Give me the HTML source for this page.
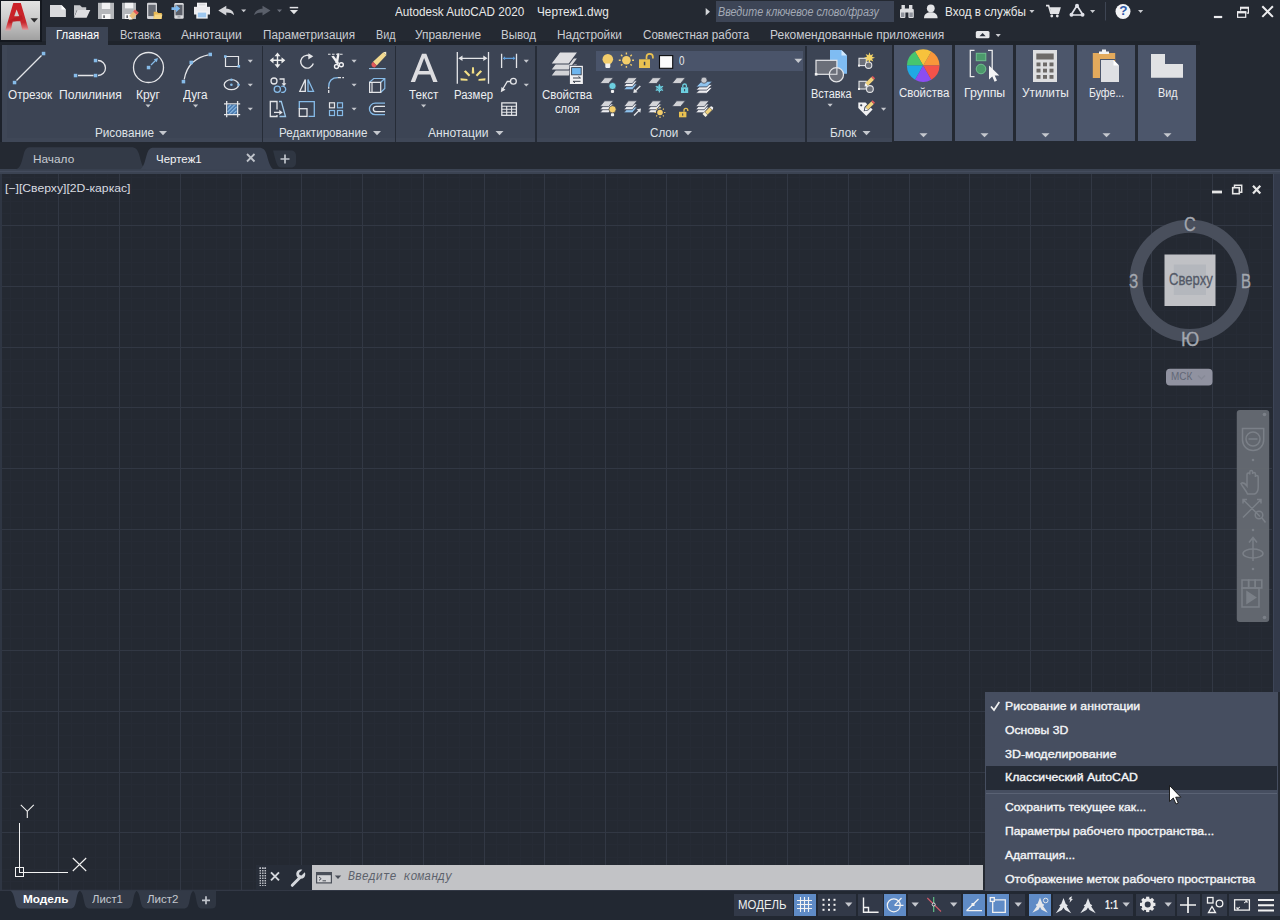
<!DOCTYPE html>
<html><head><meta charset="utf-8"><title>AutoCAD</title><style>
html,body{margin:0;padding:0;}
body{width:1280px;height:920px;overflow:hidden;position:relative;background:#242932;font-family:"Liberation Sans",sans-serif;}
.a{position:absolute;}
.t{position:absolute;white-space:pre;line-height:1;transform-origin:0 50%;font-family:"Liberation Sans",sans-serif;}
svg{position:absolute;left:0;top:0;overflow:visible;}

</style></head>
<body>
<!-- ===== ribbon backgrounds ===== -->
<div class="a" style="left:0;top:41px;width:1199.500px;height:4px;background:#1f242c;"></div>
<div class="a" style="left:46px;top:27px;width:62px;height:20px;background:#3c4454;"></div>
<div class="a" style="left:2px;top:45px;width:890px;height:97px;background:#3c4454;"></div>
<div class="a" style="left:0;top:45px;width:2px;height:97px;background:#1d222b;"></div>
<div class="a" style="left:2px;top:45px;width:5px;height:97px;background:#3f4757;"></div>
<div class="a" style="left:2px;top:138px;width:890px;height:4px;background:#3f4757;"></div>
<!-- panel separators -->
<div class="a" style="left:261.5px;top:46px;width:1.5px;height:96px;background:#262c37;"></div>
<div class="a" style="left:394.7px;top:46px;width:1.5px;height:96px;background:#262c37;"></div>
<div class="a" style="left:535px;top:46px;width:1.5px;height:96px;background:#262c37;"></div>
<div class="a" style="left:805.2px;top:46px;width:1.5px;height:96px;background:#262c37;"></div>
<!-- collapsed panels -->
<div class="a" style="left:894px;top:45px;width:58px;height:96px;background:#4c566b;"></div>
<div class="a" style="left:955px;top:45px;width:58px;height:96px;background:#4c566b;"></div>
<div class="a" style="left:1016px;top:45px;width:58px;height:96px;background:#4c566b;"></div>
<div class="a" style="left:1077px;top:45px;width:58.300px;height:96px;background:#4c566b;"></div>
<div class="a" style="left:1138px;top:45px;width:58.300px;height:96px;background:#4c566b;"></div>
<!-- layer combo -->
<div class="a" style="left:596.3px;top:50.6px;width:207px;height:20.6px;background:#4a546a;"></div>
<!-- search box -->
<div class="a" style="left:715.7px;top:1px;width:178px;height:21px;background:#3d4556;"></div>
<!-- ===== file tab bar ===== -->
<div class="a" style="left:0;top:169px;width:1280px;height:5px;background:#3b4352;"></div>
<div class="a" style="left:0;top:170.5px;width:1280px;height:1.5px;background:#444c5d;"></div>
<!-- ===== drawing area ===== -->
<div class="a" id="dw" style="left:0;top:174px;width:1280px;height:716px;background:#242932;"></div>
<!-- status bar -->
<div class="a" style="left:0;top:890px;width:1280px;height:30px;background:#222832;"></div>

<svg width="1280" height="920" viewBox="0 0 1280 920" shape-rendering="crispEdges">
<path d="M10.5 174V890M22.5 174V890M34.5 174V890M46.5 174V890M71.5 174V890M83.5 174V890M95.5 174V890M107.5 174V890M131.5 174V890M144.5 174V890M156.5 174V890M168.5 174V890M192.5 174V890M204.5 174V890M216.5 174V890M229.5 174V890M253.5 174V890M265.5 174V890M277.5 174V890M289.5 174V890M314.5 174V890M326.5 174V890M338.5 174V890M350.5 174V890M374.5 174V890M386.5 174V890M399.5 174V890M411.5 174V890M435.5 174V890M447.5 174V890M459.5 174V890M471.5 174V890M496.5 174V890M508.5 174V890M520.5 174V890M532.5 174V890M556.5 174V890M569.5 174V890M581.5 174V890M593.5 174V890M617.5 174V890M629.5 174V890M641.5 174V890M654.5 174V890M678.5 174V890M690.5 174V890M702.5 174V890M714.5 174V890M739.5 174V890M751.5 174V890M763.5 174V890M775.5 174V890M799.5 174V890M811.5 174V890M824.5 174V890M836.5 174V890M860.5 174V890M872.5 174V890M884.5 174V890M896.5 174V890M921.5 174V890M933.5 174V890M945.5 174V890M957.5 174V890M981.5 174V890M994.5 174V890M1006.5 174V890M1018.5 174V890M1042.5 174V890M1054.5 174V890M1066.5 174V890M1079.5 174V890M1103.5 174V890M1115.5 174V890M1127.5 174V890M1139.5 174V890M1164.5 174V890M1176.5 174V890M1188.5 174V890M1200.5 174V890M1224.5 174V890M1236.5 174V890M1249.5 174V890M1261.5 174V890M0 177.5H1272M0 189.5H1272M0 201.5H1272M0 213.5H1272M0 237.5H1272M0 249.5H1272M0 262.5H1272M0 274.5H1272M0 298.5H1272M0 310.5H1272M0 322.5H1272M0 334.5H1272M0 359.5H1272M0 371.5H1272M0 383.5H1272M0 395.5H1272M0 419.5H1272M0 432.5H1272M0 444.5H1272M0 456.5H1272M0 480.5H1272M0 492.5H1272M0 504.5H1272M0 517.5H1272M0 541.5H1272M0 553.5H1272M0 565.5H1272M0 577.5H1272M0 602.5H1272M0 614.5H1272M0 626.5H1272M0 638.5H1272M0 662.5H1272M0 674.5H1272M0 687.5H1272M0 699.5H1272M0 723.5H1272M0 735.5H1272M0 747.5H1272M0 759.5H1272M0 784.5H1272M0 796.5H1272M0 808.5H1272M0 820.5H1272M0 844.5H1272M0 857.5H1272M0 869.5H1272M0 881.5H1272" stroke="#262b35" stroke-width="1" fill="none" shape-rendering="auto"/>
<path d="M58.5 174V890M119.5 174V890M180.5 174V890M241.5 174V890M301.5 174V890M362.5 174V890M423.5 174V890M484.5 174V890M544.5 174V890M605.5 174V890M666.5 174V890M726.5 174V890M787.5 174V890M848.5 174V890M909.5 174V890M969.5 174V890M1030.5 174V890M1091.5 174V890M1151.5 174V890M1212.5 174V890M0 225.5H1272M0 286.5H1272M0 347.5H1272M0 407.5H1272M0 468.5H1272M0 529.5H1272M0 589.5H1272M0 650.5H1272M0 711.5H1272M0 772.5H1272M0 832.5H1272" stroke="#323844" stroke-width="1" fill="none" shape-rendering="auto"/>
</svg>
<!-- file tabs + layout tabs -->
<svg width="1280" height="920" viewBox="0 0 1280 920">
<!-- Начало tab -->
<path d="M16 169.2 C21 168 22 160 24 153 C25.5 148.5 27 147.3 31 147.3 H131 C136 147.3 137.5 150 139 154 C141 161 142 168 146 169.2 Z" fill="#333a47"/>
<!-- Чертеж1 active tab -->
<path d="M139.5 169.5 C144 168 145 160 147 154 C148.5 149.5 150 147.8 154 147.8 H259 C263.5 147.8 265 150 266.5 154 C268.5 161 270 168 274 169.5 Z" fill="#3c4454"/>
<!-- plus tab -->
<path d="M273 150.5 H291 C294 150.5 296 152.5 296 155.5 V162.5 C296 165.5 294 167.5 291 167.5 H281 C277 167.5 276 162 273 150.5 Z" fill="#2f3642"/>
<path d="M285 154.5V163.5M280.5 159H289.5" stroke="#c0c4cb" stroke-width="1.700" fill="none"/>
<!-- close x -->
<path d="M247 154L254.5 161.5M254.5 154L247 161.5" stroke="#bfc3ca" stroke-width="1.800" fill="none"/>
<!-- layout tabs -->
<path d="M0 890.3H1280" stroke="#373d4a" stroke-width="1"/>
<path d="M10 890.5 H80 C77.5 892 77 896 76 901 C75 906 74 908.5 70 908.5 H21 C17 908.5 16 906 15 901 C14 896 13 892 10 890.5 Z" fill="#3c4454"/>
<path d="M79.5 890.8 H137 C134.5 892 134 896 133 901 C132 906 131 908.5 127 908.5 H90 C86 908.5 85 906 84 901 C83 896 82.5 892 79.5 890.8 Z" fill="#333a47"/>
<path d="M136 890.8 H193.5 C191 892 190.500 896 189.5 901 C188.5 906 187.5 908.5 183.5 908.5 H146.5 C142.5 908.5 141.5 906 140.5 901 C139.500 896 139 892 136 890.8 Z" fill="#333a47"/>
<path d="M192.500 890.8 H216 V904 C216 907 214.500 908.5 211.5 908.5 H202 C198.500 908.5 197.500 906 196.5 901 C195.500 896 195.500 892 192.500 890.8 Z" fill="#2f3642"/>
<path d="M206 896.3V904.3M202 900.3H210" stroke="#c0c4cb" stroke-width="1.700" fill="none"/>
</svg>

<!-- viewcube + navbar + ucs + vp controls + right strip -->
<div class="a" style="left:1272.500px;top:174px;width:7.500px;height:716px;background:#333a4a;"></div><div class="a" style="left:1272.500px;top:174px;width:1px;height:716px;background:#3d4557;"></div>
<div class="a" style="left:0;top:174px;width:1.500px;height:716px;background:#2f3643;"></div>
<svg width="1280" height="920" viewBox="0 0 1280 920">
<!-- compass ring -->
<ellipse cx="1189.700" cy="280.900" rx="53.600" ry="54.600" fill="none" stroke="#494f5c" stroke-width="13"/>
<!-- cube face -->
<rect x="1164.500" y="254.500" width="51" height="51.5" fill="#c0c1c5"/>
<rect x="1173.800" y="264.500" width="32.200" height="30.500" fill="#b4b7bd"/>
<!-- MCK box -->
<rect x="1166" y="368.700" width="46.500" height="16.800" rx="4" fill="#9092a0"/>
<path d="M1198 375.500l3.500 3.500 3.500-3.500" fill="none" stroke="#868996" stroke-width="1.500"/>
<!-- viewport controls -->
<path d="M1212 192H1222" stroke="#e6e6e6" stroke-width="2.800"/>
<path d="M1234.500 187.200V185.300H1241.700V192.300H1239.800" fill="none" stroke="#e6e6e6" stroke-width="1.500"/>
<rect x="1232.700" y="187.700" width="6.600" height="6" fill="none" stroke="#e6e6e6" stroke-width="1.600"/>
<path d="M1253 185.700L1260.300 193.500M1260.300 185.700L1253 193.500" stroke="#e6e6e6" stroke-width="2.200"/>
<!-- nav bar -->
<rect x="1236.800" y="410" width="32.400" height="212" rx="3" fill="#656a71" opacity="0.960"/>
<g fill="none" stroke="#7b8088" stroke-width="1.500">
 <!-- wheel -->
 <path d="M1242.500 428.500H1263.700V440a10.600 10.600 0 0 1-21.200 0Z" />
 <circle cx="1253" cy="439" r="7"/>
 <path d="M1248.500 439h9"/>
 <!-- hand -->
 <path d="M1247.500 494c-1.500-4-5-7-6.500-10.500 2-1.500 4.500.500 6 2.500v-11.500c0-2 2.800-2 2.800 0v-2.500c0-2 2.800-2 2.800 0v2c0-2 2.800-2 2.800 0v3c0-2 2.800-2 2.800 0v10.500c0 3-1.500 5.500-3.500 6.500z"/>
 <!-- zoom extents -->
 <path d="M1243 499.500l17 17M1261 499.500l-18 18M1243 503.500v-4h4M1257 499.500h4v4"/>
 <circle cx="1259" cy="515" r="3.800"/>
 <path d="M1262 518l3.500 4.500"/>
 <!-- orbit -->
 <path d="M1253 561v-22M1249 542.500l4-5 4 5"/>
 <ellipse cx="1253" cy="553.500" rx="10" ry="4.500"/>
 <!-- showmotion -->
 <rect x="1242" y="580" width="6.600" height="8"/><rect x="1248.600" y="580" width="6.600" height="8"/><rect x="1255.200" y="580" width="6.600" height="8"/>
 <rect x="1242" y="588" width="17" height="19"/>
 <path d="M1247 592v11l8.500-5.500z" fill="#7b8088"/>
</g>
<g fill="#7b8088"><circle cx="1253" cy="460" r="1.300"/><circle cx="1253" cy="530" r="1.300"/><circle cx="1253" cy="569" r="1.300"/>
<circle cx="1264.500" cy="414.500" r="1.800"/><circle cx="1264.500" cy="617.500" r="1.800"/></g>
<!-- UCS icon -->
<g fill="none" stroke="#f2f2f2" stroke-width="1.100" shape-rendering="crispEdges">
 <path d="M19.500 823V872.500H67.500"/>
 <rect x="15.500" y="867.500" width="8" height="9"/>
</g>
<g fill="none" stroke="#f2f2f2" stroke-width="1.100">
 <path d="M20.800 804.800L27.300 811.300L33.800 804.800M27.300 811.300V818"/>
 <path d="M72.800 858L86.200 871M86.200 858L72.800 871"/>
</g>
</svg>

<!-- command line -->
<div class="a" style="left:256px;top:865px;width:56px;height:24.600px;background:#272d38;"></div>
<div class="a" style="left:312px;top:865px;width:671px;height:24.600px;background:#c2c3c6;"></div>
<svg width="1280" height="920" viewBox="0 0 1280 920">
<!-- grip -->
<g fill="#b9bcc3">
<rect x="259.500" y="867.500" width="1.500" height="1.500"/><rect x="262" y="867.500" width="1.500" height="1.500"/><rect x="264.500" y="867.500" width="1.500" height="1.500"/>
</g>
<path d="M260.300 867.500V886M262.800 867.500V886M265.300 867.500V886" stroke="#b9bcc3" stroke-width="1.500" stroke-dasharray="1.500 1" fill="none"/>
<path d="M271 872.300L279 880.300M279 872.300L271 880.300" stroke="#d5d8dd" stroke-width="1.900" fill="none"/>
<!-- wrench -->
<path d="M292.300 885.300L299.500 878" stroke="#d5d8dd" stroke-width="3" stroke-linecap="round" fill="none"/>
<path d="M304.800 872.300l-3.300 3.300-2-.5-.5-2 3.300-3.300c-2.200-.8-4.600.200-5.600 2.300-1 2.100-.3 4.500 1.500 5.800 1.800 1.300 4.300 1.100 5.900-.400 1.200-1.400 1.500-3.500.700-5.200z" fill="#d5d8dd"/>
<!-- cmd icon -->
<rect x="316.600" y="872.600" width="14.800" height="10.300" fill="#d4d5d8" stroke="#4a4f59" stroke-width="1.200"/>
<path d="M316 874h16" stroke="#4a4f59" stroke-width="2.400"/>
<path d="M319 877l2.200 1.700-2.200 1.700M322.500 880.800h3.500" stroke="#4a4f59" stroke-width="1" fill="none"/>
<path d="M334.800 875.500h6.400l-3.200 3.600z" fill="#4a4f59"/>
</svg>

<!-- workspace menu -->
<div class="a" style="left:984.500px;top:692px;width:293.500px;height:198.500px;background:#464e60;"></div>
<div class="a" style="left:985.500px;top:766px;width:291.500px;height:23.600px;background:#252b36;"></div>
<div class="a" style="left:985.500px;top:792.600px;width:291.500px;height:1px;background:#5a6274;"></div>
<div class="a" style="left:1278px;top:692px;width:2px;height:198.500px;background:#242932;"></div>
<svg width="1280" height="920" viewBox="0 0 1280 920">
<path d="M991 706.500L994 710L999.300 702" fill="none" stroke="#f0f0f0" stroke-width="1.700"/>
<!-- mouse cursor -->
<path d="M1169.500 785.500V801.500L1173.300 798L1176 804L1178.300 803L1175.700 797.200H1180.800Z" fill="#ffffff" stroke="#111" stroke-width="0.900" stroke-linejoin="round"/>
</svg>

<!-- status bar -->
<div class="a" style="left:734px;top:893.500px;width:58.500px;height:22.500px;background:#323948;"></div>
<div class="a" style="left:794px;top:893.500px;width:21.800px;height:22.500px;background:#5f8bc6;"></div>
<div class="a" style="left:817.500px;top:893.500px;width:38.500px;height:22.500px;background:#323948;"></div>
<div class="a" style="left:858px;top:893.500px;width:24.500px;height:22.500px;background:#323948;"></div>
<div class="a" style="left:884px;top:893.500px;width:22px;height:22.500px;background:#5f8bc6;"></div>
<div class="a" style="left:907.500px;top:893.500px;width:53.500px;height:22.500px;background:#323948;"></div>
<div class="a" style="left:962.800px;top:893.500px;width:22px;height:22.500px;background:#5f8bc6;"></div>
<div class="a" style="left:987.300px;top:893.500px;width:21.500px;height:22.500px;background:#5f8bc6;"></div>
<div class="a" style="left:1010.300px;top:893.500px;width:15px;height:22.500px;background:#323948;"></div>
<div class="a" style="left:1029px;top:893.500px;width:22.400px;height:22.500px;background:#5f8bc6;"></div>
<div class="a" style="left:1053px;top:893.500px;width:80px;height:22.500px;background:#323948;"></div>
<div class="a" style="left:1135.500px;top:893.500px;width:39px;height:22.500px;background:#323948;"></div>
<div class="a" style="left:1176.500px;top:893.500px;width:23px;height:22.500px;background:#323948;"></div>
<div class="a" style="left:1201.500px;top:893.500px;width:25.500px;height:22.500px;background:#323948;"></div>
<div class="a" style="left:1229px;top:893.500px;width:51px;height:22.500px;background:#323948;"></div>
<svg width="1280" height="920" viewBox="0 0 1280 920">
<g fill="none" stroke="#f2f2f2" stroke-width="1.300">
<!-- grid icon -->
<path d="M800.500 897V912M804.500 897V912M808.500 897V912M797 900.500H812M797 904.500H812M797 908.500H812" stroke-width="1.100"/>
<!-- ortho -->
<path d="M863.500 897.500V912.300H878.600M863.500 907.500H868.500V912.300" stroke-width="1.400"/>
<!-- polar -->
<circle cx="893.800" cy="905.300" r="6.500" stroke-width="1.200"/><path d="M894.500 905.300H903.500M894.500 905.300L901.500 898" stroke-width="1.200"/>
<!-- otrack -->
<path d="M966.500 910.700H982M966.500 910.700L978.500 899" stroke-width="1.300"/>
<!-- osnap -->
<path d="M994.500 899.800H1005.300V912.300H992.700V902"/>
<rect x="990.300" y="897.600" width="4" height="3.800" fill="#5f8bc6"/>
<!-- plus -->
<path d="M1188 897V913M1180 905H1196" stroke-width="1.700"/>
<!-- shapes -->
<rect x="1207.500" y="897.500" width="5.500" height="5.500"/><circle cx="1219.500" cy="903.500" r="3.300"/><path d="M1212 906.500L1215.500 912.500H1208.500Z"/>
<!-- fullscreen -->
<rect x="1234.600" y="899.800" width="14.800" height="10.300"/>
<path d="M1240 907l-3 2M1237 907v2h2M1244 903l3-2M1247 903v-2h-2" stroke-width="1"/>
<!-- hamburger -->
<path d="M1258 900H1274M1258 905.200H1274M1258 910.500H1274" stroke-width="2"/>
</g>
<!-- snap dots -->
<g fill="#f2f2f2">
<rect x="822.500" y="898.800" width="2" height="2"/><rect x="828" y="898.800" width="2" height="2"/><rect x="833.500" y="898.800" width="2" height="2"/>
<rect x="822.500" y="903.800" width="2" height="2"/><rect x="828" y="903.800" width="2" height="2"/><rect x="833.500" y="903.800" width="2" height="2"/>
<rect x="822.500" y="908.800" width="2" height="2"/><rect x="828" y="908.800" width="2" height="2"/><rect x="833.500" y="908.800" width="2" height="2"/>
<rect x="971.500" y="903" width="3" height="3"/>
</g>
<!-- dropdown arrows -->
<g fill="#c5c8ce">
<path d="M845 902.500h7.400l-3.700 4.200z"/><path d="M911.500 902.500h7.400l-3.700 4.200z"/><path d="M950 902.500h7.400l-3.700 4.200z"/><path d="M1014.500 902.500h7.400l-3.700 4.200z"/><path d="M1122.500 902.500h7.400l-3.700 4.200z"/><path d="M1164.500 902.500h7.400l-3.700 4.200z"/>
</g>
<!-- isodraft -->
<path d="M933.700 897V912" stroke="#63c98a" stroke-width="1.100"/><path d="M927.300 898L941 911.500" stroke="#cf5c6b" stroke-width="1.100"/><circle cx="933.700" cy="904.500" r="1.500" fill="#323948" stroke="#f2f2f2" stroke-width="0.900"/>
<!-- annotation icons -->
<g fill="#e4e6ea">
<path d="M1040.0 897.5L1042.3 903.5L1044.3 904.8L1043.2 906.2L1047.7 912.8L1041.6 909.7L1040.0 907.1L1038.4 909.7L1032.3 912.8L1036.8 906.2L1035.7 904.8L1037.7 903.5Z"/>
<path d="M1063.5 897.9L1065.8 903.9L1067.8 905.2L1066.7 906.6L1071.2 913.2L1065.1 910.1L1063.5 907.5L1061.9 910.1L1055.8 913.2L1060.3 906.6L1059.2 905.2L1061.2 903.9Z"/>
<path d="M1088.0 897.9L1090.3 903.9L1092.3 905.2L1091.2 906.6L1095.7 913.2L1089.6 910.1L1088.0 907.5L1086.4 910.1L1080.3 913.2L1084.8 906.6L1083.7 905.2L1085.7 903.9Z"/>
<path d="M1069.800 897.200l2.400-1-1 2.600 1.700.2-3.400 3.700.8-3.100-1.800-.2z"/>
</g>
<circle cx="1045.700" cy="900.500" r="2.300" fill="none" stroke="#e4e6ea" stroke-width="1"/>
<!-- gear -->
<g transform="translate(1147.700 904.400)">
<circle r="4.600" fill="none" stroke="#e9e9ea" stroke-width="3.200"/>
<g fill="#e9e9ea">
<rect x="-1.600" y="-7.700" width="3.200" height="3.400"/><rect x="-1.600" y="4.300" width="3.200" height="3.400"/>
<rect x="-7.700" y="-1.600" width="3.400" height="3.200"/><rect x="4.300" y="-1.600" width="3.400" height="3.200"/>
<g transform="rotate(45)"><rect x="-1.600" y="-7.700" width="3.200" height="3.400"/><rect x="-1.600" y="4.300" width="3.200" height="3.400"/>
<rect x="-7.700" y="-1.600" width="3.400" height="3.200"/><rect x="4.300" y="-1.600" width="3.400" height="3.200"/></g>
</g></g>
</svg>

<!-- title bar: app button + QAT + right icons -->
<div class="a" style="left:0;top:0;width:41.500px;height:41.500px;background:#14181f;"></div>
<div class="a" style="left:1px;top:1px;width:39px;height:39px;background:linear-gradient(#e2e2e2,#cfcfcf 40%,#a0a0a0);"></div>
<svg width="1280" height="920" viewBox="0 0 1280 920">
<defs>
<linearGradient id="ag" x1="0" y1="0" x2="0" y2="1"><stop offset="0" stop-color="#cc1f26"/><stop offset="0.700" stop-color="#c7262c"/><stop offset="0.880" stop-color="#db6266"/><stop offset="1" stop-color="#e6a3a6" stop-opacity="0.750"/></linearGradient>
</defs>
<!-- big A -->
<path d="M13.300 3H20.800L28.700 30H22.300L20.300 21.300H12.700L10.800 30.500H5.200Z M14.200 16.300H19.300L16.600 9.500Z" fill="url(#ag)" fill-rule="evenodd"/>
<path d="M9 20.500l12.500-5.500 1.300 4.300-13.300 4z" fill="#ad181e" opacity="0.500"/>
<path d="M30.500 18.200H38L34.250 22.600Z" fill="#2b2b2d"/>
<!-- new -->
<path d="M50 5.100H61.500L65.900 9.500V17H50Z" fill="#d9d9dc"/><path d="M61.500 5.100V9.500H65.900Z" fill="#ffffff"/>
<!-- open -->
<path d="M74 17.500V5.200H80L82 7.200H86.200V10H77Z" fill="#c6c7cb"/>
<path d="M77.300 10H90.300L86.600 17.800H74Z" fill="#dedee1"/>
<!-- save -->
<path d="M98 2.800H114V19H98Z" fill="#b5b7bb"/>
<rect x="101.800" y="2.800" width="8.400" height="6.200" fill="#f1f1f3"/>
<rect x="101.800" y="14" width="8.700" height="5" fill="#f6f6f7"/><rect x="103.400" y="15.300" width="1.300" height="2.700" fill="#3b3f48"/>
<!-- save as -->
<path d="M122 2.800H136V19H122Z" fill="#b5b7bb"/>
<rect x="125" y="2.800" width="8.300" height="5.600" fill="#f1f1f3"/>
<rect x="124.800" y="14" width="6" height="5" fill="#f6f6f7"/><rect x="126.500" y="15.300" width="1.300" height="2.700" fill="#3b3f48"/>
<path d="M135 9.500L138.600 12.800L132.500 19.200L128.800 19.600L129.300 15.800Z" fill="#e8bd7c"/>
<path d="M135 9.500L138.600 12.800L136.800 14.700L133.200 11.400Z" fill="#e2595b"/>
<path d="M129.300 15.800L132.500 19.200L128.800 19.600Z" fill="#f4f4f4"/>
<!-- mobile open -->
<rect x="147" y="2.800" width="10" height="16.200" rx="1.200" fill="#d2d3d7"/><rect x="148.300" y="4.800" width="7.400" height="11.300" fill="#676b74"/>
<path d="M153.700 19V11.700H157L158.200 13H161.800V19Z" fill="#e9b955"/><path d="M155 14.500H162.500L161 19H153.700Z" fill="#f6d685"/>
<!-- mobile save -->
<rect x="174.300" y="3" width="9.400" height="15.800" rx="1.200" fill="#dadbde"/><rect x="175.500" y="4.800" width="7" height="10.500" fill="#5b5f69"/>
<rect x="177.500" y="16.400" width="3" height="1" fill="#8a8d95"/>
<path d="M171.500 7.300H176V5L180.200 8.600L176 12.200V9.900H171.500Z" fill="#7fbaf0"/>
<!-- print -->
<rect x="197" y="2.700" width="10" height="5" fill="#f2f2f4"/>
<rect x="198.500" y="3.800" width="7" height="1.600" fill="#d9dadd"/>
<path d="M194 6.800H210V14.500H194Z" fill="#ececef"/>
<rect x="196.300" y="11.300" width="11.400" height="7.300" fill="#f4f4f6"/><rect x="197.800" y="12.600" width="8.400" height="4.800" fill="#9dc7ef"/>
<!-- undo -->
<path d="M218.300 10.600L226.300 5.800V8.800C230.500 8.800 233.800 11 234 15.200C232 13 229.800 12.400 226.300 12.400V15.400Z" fill="#d3d4d8"/>
<path d="M241.200 9.600H246.200L243.700 12.300Z" fill="#c9cbd0"/>
<!-- redo dim -->
<path d="M270.500 10.600L262.500 5.800V8.800C258.300 8.800 255 11 254 15.200C256.500 13 258.800 12.400 262.500 12.400V15.400Z" fill="#5a5f6a"/>
<path d="M277 9.600H282L279.500 12.300Z" fill="#6a6f7a"/>
<!-- customise -->
<path d="M289.700 7.600H298.200" stroke="#e2e3e6" stroke-width="1.500"/><path d="M289.900 10H298L293.950 14.200Z" fill="#e2e3e6"/>
<!-- search arrow -->
<path d="M705.700 8V15.600L710 11.800Z" fill="#d5d7db"/>
<!-- binoculars -->
<g fill="#dcdde0">
<rect x="900" y="9" width="5.400" height="9" rx="1"/><rect x="908.400" y="9" width="5.400" height="9" rx="1"/>
<rect x="901.500" y="5" width="3.400" height="5"/><rect x="909" y="5" width="3.400" height="5"/>
<rect x="905" y="8.500" width="4" height="4"/>
</g>
<rect x="901" y="12.500" width="3.400" height="4.500" fill="#8f939c"/><rect x="909.400" y="12.500" width="3.400" height="4.500" fill="#8f939c"/>
<!-- user -->
<circle cx="930.800" cy="8.300" r="3.900" fill="#e3e4e7"/>
<path d="M924 18.300C924 14 927 12.300 930.800 12.300C934.600 12.300 937.600 14 937.600 18.300Z" fill="#e3e4e7"/>
<path d="M1029.300 10H1034.500L1031.900 12.900Z" fill="#c9cbd0"/>
<!-- cart -->
<path d="M1046 5.600H1048.600L1050.800 13.300H1058.300L1059.800 8H1050" fill="none" stroke="#e3e4e7" stroke-width="1.600"/>
<path d="M1050 8H1060L1058.300 13.300H1051Z" fill="#e3e4e7"/>
<circle cx="1051.800" cy="16" r="1.400" fill="#e3e4e7"/><circle cx="1057.300" cy="16" r="1.400" fill="#e3e4e7"/>
<!-- A360 triangle -->
<path d="M1077 5.500L1083 15H1071Z" fill="none" stroke="#dfe1e8" stroke-width="1.700" stroke-linejoin="round"/>
<circle cx="1077" cy="5.800" r="2" fill="#dfe1e8"/><circle cx="1071.500" cy="14.800" r="2" fill="#dfe1e8"/><circle cx="1082.500" cy="14.800" r="2" fill="#dfe1e8"/>
<path d="M1090 10H1095.200L1092.600 12.900Z" fill="#c9cbd0"/>
<path d="M1105.500 2V20.500" stroke="#3e4553" stroke-width="1"/>
<!-- help -->
<circle cx="1123" cy="11.500" r="7.500" fill="#f3f4f6"/>
<path d="M1138 10H1143.200L1140.600 12.900Z" fill="#c9cbd0"/>
<!-- window controls -->
<path d="M1213.900 17H1222.200" stroke="#ececee" stroke-width="2.200"/>
<path d="M1240.600 10.500V7.600H1248.400V13.100H1246.800" fill="none" stroke="#ececee" stroke-width="1.200"/>
<path d="M1240 7.700H1249" stroke="#ececee" stroke-width="2"/>
<rect x="1237.600" y="11.900" width="8.100" height="5.400" fill="none" stroke="#ececee" stroke-width="1.200"/>
<path d="M1237 12.300H1246.300" stroke="#ececee" stroke-width="2.200"/>
<path d="M1262.300 6.300L1272.900 16.900M1272.900 6.300L1262.300 16.900" stroke="#ececee" stroke-width="2"/>
<!-- ribbon tab minimise icon -->
<rect x="975.800" y="31" width="13.700" height="7.300" rx="1.500" fill="#e6e7ea"/>
<path d="M979.500 36.300H985.700L982.600 33Z" fill="#2a303c"/>
<path d="M995.600 34H1000.800L998.200 36.900Z" fill="#c9cbd0"/>
</svg>
<span class="t" style="left:1119.300px;top:4.300px;font-size:13.500px;font-weight:bold;color:#2d57a8;">?</span>

<!-- ribbon: draw + modify panels -->
<svg width="1280" height="920" viewBox="0 0 1280 920">
<g fill="none" stroke="#e4e5e8" stroke-width="1.300">
<!-- line -->
<path d="M16.500 80.500L41.500 55.500"/>
<!-- polyline -->
<path d="M78 75.500H93.500M98 60.500A7.500 7.500 0 0 1 98 75.500"/>
<!-- circle -->
<circle cx="148.500" cy="67.500" r="15"/>
<!-- arc -->
<path d="M184.200 79.500C185.500 72 188 67 192.500 62.500C197 58.500 202 56 208.500 54.800"/>
<!-- rectangle -->
<path d="M225.500 56.500H238.500V66.500H225.500Z" stroke-width="1.200"/>
<!-- ellipse -->
<ellipse cx="231.400" cy="84.700" rx="7.200" ry="5" />
<!-- hatch frame -->
<path d="M224 103.800H240.200M224 114.600H240.200M226.700 101V117.200M237.600 101V117.200"/>
</g>
<g fill="#86bbe8">
<rect x="41.800" y="51.800" width="3.500" height="3.500"/><rect x="12.800" y="80.800" width="3.500" height="3.500"/>
<rect x="93.800" y="58.800" width="3.500" height="3.500"/><rect x="73.800" y="73.800" width="3.500" height="3.500"/><rect x="93.800" y="73.800" width="3.500" height="3.500"/>
<rect x="146.800" y="65.800" width="3.500" height="3.500"/>
<rect x="208.500" y="52.700" width="3.500" height="3.500"/><rect x="189.500" y="60.700" width="3.500" height="3.500"/><rect x="181.700" y="79.900" width="3.500" height="3.500"/>
<rect x="224" y="55.200" width="2.600" height="2.600"/><rect x="237.500" y="65" width="2.600" height="2.600"/>
<circle cx="231.400" cy="84.700" r="1.300"/><circle cx="231.400" cy="79.700" r="1.300"/><circle cx="238.600" cy="84.700" r="1.300"/>
</g>
<!-- circle arrow -->
<path d="M151 65L156 60" stroke="#86bbe8" stroke-width="1.300" fill="none"/><path d="M158 58L153.800 59.200L156.800 62.200Z" fill="#86bbe8"/>
<!-- hatch fill -->
<rect x="227.500" y="104.600" width="9.300" height="9.300" fill="#4d7fb4"/>
<path d="M227.500 108l3.500-3.400M227.500 112l7.400-7.400M229.500 113.900l7.300-7.300M233.500 113.900l3.300-3.300" stroke="#a9d0f2" stroke-width="1" fill="none"/>
<!-- dropdown arrows -->
<g fill="#c5c8ce">
<path d="M145.500 104.500H150.700L148.100 107.400Z"/><path d="M193 104.500H198.200L195.600 107.400Z"/>
<path d="M247.700 59.800H252.900L250.300 62.700Z"/><path d="M247.700 83.700H252.900L250.300 86.600Z"/><path d="M247.700 107.700H252.900L250.300 110.600Z"/>
<path d="M351.500 59.800H356.700L354.100 62.700Z"/><path d="M351.500 83.700H356.700L354.100 86.600Z"/><path d="M351.500 107.700H356.700L354.100 110.600Z"/>
<path d="M421 104.500H426.200L423.600 107.400Z"/>
<path d="M523.700 59.800H528.900L526.300 62.700Z"/><path d="M523.700 83.700H528.900L526.300 86.600Z"/>
<path d="M827.500 103.800H832.700L830.100 106.700Z"/><path d="M881 107.800H886.200L883.600 110.700Z"/>
<!-- panel title arrows -->
<path d="M159 131H167L163 135.300Z"/><path d="M373 131H381L377 135.300Z"/><path d="M495.500 131H503.500L499.500 135.300Z"/><path d="M684 131H692L688 135.300Z"/><path d="M862.500 131H870.500L866.500 135.300Z"/>
<!-- collapsed panel arrows -->
<path d="M919.500 133.200H927.500L923.500 137.300Z"/><path d="M980.500 133.200H988.500L984.500 137.300Z"/><path d="M1041.500 133.200H1049.500L1045.500 137.300Z"/><path d="M1102.500 133.200H1110.500L1106.500 137.300Z"/><path d="M1163.500 133.200H1171.500L1167.500 137.300Z"/>
<path d="M794.400 58.700H802.200L798.300 62.900Z"/>
</g>
<!-- ===== modify ===== -->
<!-- move -->
<g fill="#eceded" stroke="none">
<path d="M277.500 52.500L280.500 56.300H278.200V59.500H281.500V57.200L285.300 60.300L281.500 63.400V61H278.200V64.300H280.500L277.500 68L274.500 64.300H276.800V61H273.500V63.400L269.700 60.300L273.500 57.200V59.500H276.800V56.300H274.500Z"/>
</g>
<!-- rotate -->
<path d="M311.500 57A6.400 6.400 0 1 0 313.300 63.500" fill="none" stroke="#e4e5e8" stroke-width="1.400"/>
<path d="M308.300 53.300L313.300 56.300L308.300 59.500Z" fill="#e4e5e8"/>
<!-- trim (scissors) -->
<path d="M328 54.300H344" stroke="#e4e5e8" stroke-width="1.100" stroke-dasharray="2.600 1.400" fill="none"/>
<path d="M331.300 56.200L333.800 55.800L339.300 63.200L337.300 64.600Z" fill="#f1f1f3"/>
<path d="M337.500 53.200L339.600 53.600L338 63.500L335.300 63Z" fill="#f1f1f3"/>
<circle cx="336.500" cy="66.500" r="2" fill="none" stroke="#f1f1f3" stroke-width="1.400"/><circle cx="341.300" cy="64.700" r="2" fill="none" stroke="#f1f1f3" stroke-width="1.400"/>
<!-- erase -->
<path d="M369 68.600H385.800" stroke="#9cc8ea" stroke-width="1.100"/>
<path d="M383.300 52.300L386.300 55.300L376.700 65.500L373 61.800Z" fill="#f2d98f"/>
<path d="M383.300 52.300L386.300 55.300L386.200 51.800Z" fill="#f8ecc4"/>
<path d="M373 61.800L376.700 65.500L375 67.200C373.500 68.300 370.700 66 371.600 63.600Z" fill="#e2595b"/>
<!-- copy -->
<circle cx="274" cy="81" r="3" fill="none" stroke="#e4e5e8" stroke-width="1.300"/>
<path d="M279.500 79H284V84" fill="none" stroke="#e4e5e8" stroke-width="1.300"/><path d="M281.600 83.300H286.300L284 86.300Z" fill="#e4e5e8"/>
<circle cx="277.300" cy="89.300" r="3.100" fill="none" stroke="#86bbe8" stroke-width="1.300"/><path d="M281.300 86.500A3.100 3.100 0 1 1 281.300 92.100" fill="none" stroke="#86bbe8" stroke-width="1.300"/>
<!-- mirror -->
<path d="M305.300 79.500V91.300H299.800Z" fill="none" stroke="#e4e5e8" stroke-width="1.300"/>
<path d="M308 79.500V91.300H313.500Z" fill="none" stroke="#86bbe8" stroke-width="1.300"/>
<!-- fillet -->
<path d="M328.700 93V87" stroke="#e4e5e8" stroke-width="1.300" stroke-dasharray="3 1.300" fill="none"/>
<path d="M338 77.700H344" stroke="#e4e5e8" stroke-width="1.300" stroke-dasharray="3 1.300" fill="none"/>
<path d="M328.700 87C328.700 81 332 77.700 338 77.700" fill="none" stroke="#86bbe8" stroke-width="1.300"/>
<!-- explode box -->
<path d="M369.500 82.300L373.700 78.500H384.800V88.500L380.800 92.300M380.800 82.300L384.800 78.500" fill="none" stroke="#86bbe8" stroke-width="1.200"/>
<path d="M369.600 82.400H380.700V92.300H369.600ZM372 82.400V92.300" fill="none" stroke="#e4e5e8" stroke-width="1.200"/>
<!-- stretch -->
<path d="M277 109.500V101.500H270.300V116.500H277V115" fill="none" stroke="#e4e5e8" stroke-width="1.300"/>
<path d="M279 101.500H281.300L285.500 116.500H279.500" fill="none" stroke="#9cc8ea" stroke-width="1.300"/>
<path d="M274 112.400H280" stroke="#e4e5e8" stroke-width="1.300"/><path d="M279.300 109.800L282.700 112.400L279.300 115Z" fill="#e4e5e8"/>
<!-- scale -->
<path d="M299.300 109V101.600H314.300V116.400H308.500" fill="none" stroke="#86bbe8" stroke-width="1.300"/>
<rect x="299.300" y="108.700" width="7.700" height="7.700" fill="none" stroke="#e4e5e8" stroke-width="1.300"/>
<!-- array -->
<rect x="329.500" y="102.800" width="5" height="5" fill="#4a4f5c" stroke="#e4e5e8" stroke-width="1.200"/>
<rect x="337.500" y="102.800" width="5" height="5" fill="none" stroke="#86bbe8" stroke-width="1.200"/>
<rect x="329.500" y="110.500" width="5" height="5" fill="none" stroke="#86bbe8" stroke-width="1.200"/>
<rect x="337.500" y="110.500" width="5" height="5" fill="none" stroke="#86bbe8" stroke-width="1.200"/>
<!-- offset -->
<path d="M385 103.200H375.200A5.700 5.700 0 0 0 375.200 114.700H385" fill="none" stroke="#86bbe8" stroke-width="1.300"/>
<path d="M385 106.300H376A2.700 2.700 0 0 0 376 111.700H385" fill="none" stroke="#e4e5e8" stroke-width="1.300"/>
</svg>

<!-- ribbon: annotate + layers -->
<svg width="1280" height="920" viewBox="0 0 1280 920">
<path d="M422 53.700H426.300L437.600 82H433.200L430.300 74.400H418L415.100 82H410.700ZM419.300 71H429L424.150 58Z" fill="#dddde0" fill-rule="evenodd"/>
<g fill="none" stroke="#e4e5e8" stroke-width="1.300"><path d="M457.300 52V83.700M488.500 52V83.700M461 58.300H485"/></g>
<path d="M458.300 58.300L462.500 55.600V61ZM487.500 58.300L483.300 55.600V61Z" fill="#e4e5e8"/>
<g fill="#f3df86"><path d="M472.100 67.200H473.900L474.300 73.600H471.700Z"/><path d="M463.900 71.600L465.700 70.200L470.300 75.100L468.800 76.500Z"/><path d="M482.100 71.600L480.300 70.200L475.700 75.100L477.200 76.500Z"/><path d="M460.500 78.300L460.700 80.600L467.600 80.800L467.400 79Z"/><path d="M485.500 78.300L485.300 80.600L478.400 80.800L478.600 79Z"/></g>
<g fill="none" stroke="#e4e5e8" stroke-width="1.300"><path d="M501.600 53.700V68M516.500 53.700V68"/></g>
<path d="M503 58.300H515.200M504.500 56.800V59.800M513.700 56.800V59.800" stroke="#5f9edb" stroke-width="1.200" fill="none"/>
<circle cx="513.400" cy="81.300" r="2.900" fill="none" stroke="#e4e5e8" stroke-width="1.300"/>
<path d="M510.500 81.500H507.300L502.500 89.500" fill="none" stroke="#e4e5e8" stroke-width="1.300"/>
<path d="M500.800 92.200L501.500 87L505.500 89.700Z" fill="#e4e5e8"/>
<g fill="none" stroke="#e4e5e8" stroke-width="1.300"><rect x="501.800" y="102.900" width="14.600" height="12.400"/><path d="M501.800 106.200H516.400M501.800 109.200H516.400M501.800 112.200H516.400M506.700 106.200V115.300M511.600 106.200V115.300" stroke-width="1.100"/></g>
<path d="M559.7 64.0H578.0L569.0 76.0H550.7Z" fill="#d2d3d7" stroke="#3c4454" stroke-width="1.2"/>
<path d="M559.7 58.0H578.0L569.0 70.0H550.7Z" fill="#d8d9dc" stroke="#3c4454" stroke-width="1.2"/>
<path d="M559.7 52.0H578.0L569.0 64.0H550.7Z" fill="#dedee1" stroke="#3c4454" stroke-width="1.2"/>
<rect x="569.300" y="65.200" width="14" height="19.200" fill="#3c4454"/>
<rect x="569.900" y="65.800" width="13" height="18.200" fill="#f1f1f3"/>
<rect x="571.600" y="67.600" width="9.600" height="7.200" fill="#6db5ee" stroke="#39404d" stroke-width="0.900"/>
<path d="M573 78H580.500M578.500 76.500L580.500 78M573 81.300H580.500M575 82.800L573 81.300" stroke="#39404d" stroke-width="1" fill="none"/>
<circle cx="607.800" cy="59.300" r="5.300" fill="#f3cd6b"/>
<path d="M605.300 63.500H610.300V66.500C610.300 67.500 609.500 68 608.800 68H606.800C606 68 605.300 67.500 605.300 66.500Z" fill="#f2f2f2"/>
<circle cx="626.400" cy="60.200" r="4.300" fill="#f3cd6b"/>
<path d="M632.10 60.20L634.00 60.20M630.43 64.23L631.77 65.57M626.40 65.90L626.40 67.80M622.37 64.23L621.03 65.57M620.70 60.20L618.80 60.20M622.37 56.17L621.03 54.83M626.40 54.50L626.40 52.60M630.43 56.17L631.77 54.83" stroke="#f3cd6b" stroke-width="1.400" fill="none"/>
<rect x="639" y="59.300" width="11" height="8.700" fill="#eac251"/>
<path d="M646.500 59.300V57A3.200 3.200 0 0 1 652.900 57V58.600" fill="none" stroke="#eac251" stroke-width="1.700"/>
<rect x="643.800" y="61.800" width="1.500" height="3.500" fill="#3c4454"/>
<rect x="659.500" y="55.600" width="13.200" height="12.700" fill="#fbfbfb" stroke="#0c0d10" stroke-width="1.100"/>
<path d="M604.6 77.7H613.4L608.6 83.5H600.0Z" fill="#cfd0d4" stroke="#3c4454" stroke-width="0.800"/>
<circle cx="612.5" cy="86.0" r="3.6" fill="#6ccfe0" stroke="#3c4454" stroke-width="0.700"/><rect x="610.9" y="89.9" width="3.200" height="3" rx="0.800" fill="#f2f2f2"/>
<path d="M628.4 83.9H637.2L632.4 89.7H623.8Z" fill="#8fc4ef" stroke="#3c4454" stroke-width="0.800"/><path d="M628.4 80.8H637.2L632.4 86.6H623.8Z" fill="#ededf0" stroke="#3c4454" stroke-width="0.800"/><path d="M628.4 77.7H637.2L632.4 83.5H623.8Z" fill="#d4d5d9" stroke="#3c4454" stroke-width="0.800"/>
<path d="M640.300 86L635 91.300" stroke="#e4e5e8" stroke-width="1.400" fill="none"/><path d="M633.300 93L634 88.700L637.600 92.300Z" fill="#e4e5e8"/>
<path d="M652.6 77.7H661.4L656.6 83.5H648.0Z" fill="#cfd0d4" stroke="#3c4454" stroke-width="0.800"/>
<path d="M655.76 86.30L663.04 90.50M659.40 84.20L659.40 92.60M663.04 86.30L655.76 90.50" stroke="#6ccfe0" stroke-width="1.200" fill="none"/><circle cx="659.400" cy="88.400" r="2.500" fill="none" stroke="#6ccfe0" stroke-width="1"/>
<path d="M676.6 77.7H685.4L680.6 83.5H672.0Z" fill="#cfd0d4" stroke="#3c4454" stroke-width="0.800"/>
<rect x="681" y="87.300" width="7.200" height="5.700" fill="#6ccfe0"/><path d="M682.800 87.300V85.800A1.800 1.800 0 0 1 686.400 85.800V87.300" fill="none" stroke="#6ccfe0" stroke-width="1.300"/><rect x="684.100" y="89" width="1" height="2.300" fill="#3c4454"/>
<path d="M701.5 87.7H712.3L706.8 93.3H696.0Z" fill="#ededf0" stroke="#3c4454" stroke-width="0.800"/>
<path d="M701.5 84.5H712.3L706.8 90.1H696.0Z" fill="#ededf0" stroke="#3c4454" stroke-width="0.800"/>
<path d="M701.5 81.3H712.3L706.8 86.9H696.0Z" fill="#8fc4ef" stroke="#3c4454" stroke-width="0.800"/>
<circle cx="704" cy="80.200" r="3.100" fill="#c9cace" stroke="#3c4454" stroke-width="0.700"/>
<path d="M604.6 107.0H613.4L608.6 112.8H600.0Z" fill="#ededf0" stroke="#3c4454" stroke-width="0.800"/><path d="M604.6 103.9H613.4L608.6 109.7H600.0Z" fill="#ededf0" stroke="#3c4454" stroke-width="0.800"/><path d="M604.6 100.8H613.4L608.6 106.6H600.0Z" fill="#d4d5d9" stroke="#3c4454" stroke-width="0.800"/>
<circle cx="612.5" cy="109.3" r="3.6" fill="#f3cd6b" stroke="#3c4454" stroke-width="0.700"/><rect x="610.9" y="113.2" width="3.200" height="3" rx="0.800" fill="#f2f2f2"/>
<path d="M628.4 107.0H637.2L632.4 112.8H623.8Z" fill="#8fc4ef" stroke="#3c4454" stroke-width="0.800"/><path d="M628.4 103.9H637.2L632.4 109.7H623.8Z" fill="#ededf0" stroke="#3c4454" stroke-width="0.800"/><path d="M628.4 100.8H637.2L632.4 106.6H623.8Z" fill="#d4d5d9" stroke="#3c4454" stroke-width="0.800"/>
<path d="M634 115.500L639.300 110.200" stroke="#e4e5e8" stroke-width="1.400" fill="none"/><path d="M641 108.500L640.300 112.800L636.700 109.200Z" fill="#e4e5e8"/>
<path d="M652.6 107.0H661.4L656.6 112.8H648.0Z" fill="#ededf0" stroke="#3c4454" stroke-width="0.800"/><path d="M652.6 103.9H661.4L656.6 109.7H648.0Z" fill="#ededf0" stroke="#3c4454" stroke-width="0.800"/><path d="M652.6 100.8H661.4L656.6 106.6H648.0Z" fill="#d4d5d9" stroke="#3c4454" stroke-width="0.800"/>
<circle cx="660" cy="112.500" r="3.600" fill="#3c4454" stroke="#3c4454" stroke-width="1.400"/><circle cx="660" cy="112.500" r="2.800" fill="#f3cd6b"/><path d="M664.10 112.50L665.40 112.50M662.90 115.40L663.82 116.32M660.00 116.60L660.00 117.90M657.10 115.40L656.18 116.32M655.90 112.50L654.60 112.50M657.10 109.60L656.18 108.68M660.00 108.40L660.00 107.10M662.90 109.60L663.82 108.68" stroke="#f3cd6b" stroke-width="1.200" fill="none"/>
<path d="M676.6 100.8H685.4L680.6 106.6H672.0Z" fill="#cfd0d4" stroke="#3c4454" stroke-width="0.800"/>
<rect x="679" y="111.800" width="7.400" height="5.500" fill="#eac251"/><path d="M684 111.800V110.300A1.900 1.900 0 0 1 687.800 110.300V111" fill="none" stroke="#eac251" stroke-width="1.300"/><rect x="682.200" y="113.400" width="1" height="2.300" fill="#3c4454"/>
<path d="M700.3 107.0H709.1L704.3 112.8H695.7Z" fill="#ededf0" stroke="#3c4454" stroke-width="0.800"/><path d="M700.3 103.9H709.1L704.3 109.7H695.7Z" fill="#ededf0" stroke="#3c4454" stroke-width="0.800"/><path d="M700.3 100.8H709.1L704.3 106.6H695.7Z" fill="#d4d5d9" stroke="#3c4454" stroke-width="0.800"/>
<path d="M709.500 107L712.500 110L707.500 115L704.500 112Z" fill="#f0d27c" stroke="#3c4454" stroke-width="0.700"/><path d="M704.500 112L707.500 115L705.500 117L702.500 114Z" fill="#f6f0dc"/><path d="M709.500 107L712.500 110L713.300 107.800L711.700 106.200Z" fill="#f8f8f8"/>
</svg>
<!-- ribbon: block + collapsed panels -->
<svg width="1280" height="920" viewBox="0 0 1280 920">
<!-- insert big icon -->
<path d="M830 50H841.500L847 55.500V73.800H830Z" fill="#7fbcf2"/><path d="M841.500 50V55.500H847Z" fill="#d3e8fb"/>
<rect x="816" y="60.300" width="20.900" height="14" fill="#6b6f79" stroke="#e4e5e8" stroke-width="1.200"/>
<circle cx="836.400" cy="74.700" r="7.100" fill="#6b6f79" stroke="#e4e5e8" stroke-width="1.200"/>
<path d="M829.300 74.300H836.900V67.600" fill="none" stroke="#e4e5e8" stroke-width="1.100"/>
<rect x="814.800" y="73" width="2.600" height="2.600" fill="#f2f2f2"/>
<!-- create block -->
<rect x="859" y="58.300" width="7.300" height="7.300" fill="#6b6f79" stroke="#e4e5e8" stroke-width="1.100"/>
<circle cx="868.600" cy="65.200" r="3.200" fill="#6b6f79" stroke="#e4e5e8" stroke-width="1.100"/>
<rect x="858" y="64.600" width="2" height="2" fill="#f2f2f2"/>
<path d="M869.500 52.300l1 3 2.800-1.300-1.300 2.800 3 1-3 1 1.300 2.800-2.800-1.300-1 3-1-3-2.800 1.300 1.300-2.800-3-1 3-1-1.300-2.800 2.800 1.300z" fill="#f3d468"/>
<!-- edit block -->
<rect x="859" y="81.300" width="7.300" height="7.700" fill="#6b6f79" stroke="#e4e5e8" stroke-width="1.100"/>
<circle cx="869.900" cy="89" r="3.400" fill="#6b6f79" stroke="#e4e5e8" stroke-width="1.100"/>
<rect x="858" y="88" width="2" height="2" fill="#f2f2f2"/>
<path d="M871.300 77L874 79.700L868 85.700L865.300 83Z" fill="#f0d27c"/><path d="M871.300 77L874 79.700L875 78.200L872.800 76Z" fill="#e2595b"/><path d="M865.300 83L868 85.700L864.500 86.500Z" fill="#f4f4f4"/>
<!-- attribute edit -->
<path d="M858.300 102.500H865.500L872.600 109.600L866.300 115.900L858.300 108Z" fill="#f2f2f3"/>
<circle cx="861.200" cy="105.300" r="1.100" fill="#3c4454"/>
<path d="M871 100.500L874.500 104L868 110.500L863.700 111.300L864.500 107Z" fill="#3c4454"/>
<path d="M871.300 101.500L873.800 104L868 109.800L865.500 107.300Z" fill="#f0d27c"/><path d="M871.300 101.500L873.800 104L875 102.700L872.500 100.200Z" fill="#e2595b"/><path d="M865.500 107.300L868 109.800L864.700 110.600Z" fill="#f4f4f4"/>
<!-- ===== collapsed panel icons ===== -->
<!-- colour wheel -->
<g transform="translate(923.200 65.600)">
<path d="M0 0L16.300 0A16.300 16.300 0 0 0 8.150 -14.120Z" fill="#f9973a"/>
<path d="M0 0L8.150 -14.120A16.300 16.300 0 0 0 -8.150 -14.120Z" fill="#f7c23c"/>
<path d="M0 0L-8.150 -14.120A16.300 16.300 0 0 0 -16.300 0Z" fill="#46c66e"/>
<path d="M0 0L-16.300 0A16.300 16.300 0 0 0 -8.150 14.120Z" fill="#1fa9e4"/>
<path d="M0 0L-8.150 14.120A16.300 16.300 0 0 0 8.150 14.120Z" fill="#8b4df3"/>
<path d="M0 0L8.150 14.120A16.300 16.300 0 0 0 16.300 0Z" fill="#f4524a"/>
</g>
<!-- groups -->
<path d="M974.500 50.300H970.300V76.700H974.500M988 50.300H992.200V70" fill="none" stroke="#e9eaec" stroke-width="1.300"/>
<rect x="976.300" y="53.300" width="9.500" height="7.400" fill="#4c9a6c" stroke="#6fc08e" stroke-width="1"/>
<circle cx="981" cy="69" r="4.800" fill="#4c9a6c" stroke="#6fc08e" stroke-width="1"/>
<path d="M989 65.500V79.500L992.300 76.500L994.600 81.700L997 80.600L994.700 75.500H999.300Z" fill="#f4f4f5"/>
<!-- calculator -->
<rect x="1033" y="50" width="24" height="32" fill="#dedfe1"/>
<rect x="1036.300" y="53.500" width="17.400" height="6" fill="#6d6a68"/>
<g fill="#6d6a68">
<rect x="1036.500" y="62.500" width="4" height="3.800"/><rect x="1043" y="62.500" width="4" height="3.800"/><rect x="1049.500" y="62.500" width="4" height="3.800"/>
<rect x="1036.500" y="68.700" width="4" height="3.800"/><rect x="1043" y="68.700" width="4" height="3.800"/><rect x="1049.500" y="68.700" width="4" height="3.800"/>
<rect x="1036.500" y="75" width="4" height="3.800"/><rect x="1043" y="75" width="4" height="3.800"/><rect x="1049.500" y="75" width="4" height="3.800"/>
</g>
<!-- clipboard -->
<rect x="1092.800" y="53" width="22.400" height="25" fill="#e3aa5c"/>
<path d="M1099 53V51.500H1102V49.500H1106V51.500H1109V54H1099Z" fill="#f2f2f3"/>
<path d="M1101 60H1113.500L1119 65.500V82H1101Z" fill="#dfe0e3"/><path d="M1113.500 60V65.500H1119Z" fill="#ffffff"/>
<rect x="1100" y="59" width="1" height="19" fill="#4c566b"/><rect x="1100" y="59" width="15.200" height="1" fill="#4c566b"/>
<!-- view -->
<path d="M1151 54H1165V64H1183V77.800H1151Z" fill="#e1e2e4"/>
</svg>

<!-- text -->
<span class="t" style="left:394.50px;top:5.84px;font-size:12px;color:#e8e8e8;transform:scaleX(0.9735);">Autodesk AutoCAD 2020</span>
<span class="t" style="left:537.00px;top:5.84px;font-size:12px;color:#e8e8e8;transform:scaleX(0.9825);">Чертеж1.dwg</span>
<span class="t" style="left:718.00px;top:5.84px;font-size:12px;color:#a3a9b5;transform:scaleX(0.8927);font-style:italic;">Введите ключевое слово/фразу</span>
<span class="t" style="left:944.50px;top:5.84px;font-size:12px;color:#e8e8e8;transform:scaleX(0.9759);">Вход в службы</span>
<span class="t" style="left:55.50px;top:28.89px;font-size:12.3px;color:#ffffff;transform:scaleX(0.9239);">Главная</span>
<span class="t" style="left:119.50px;top:28.89px;font-size:12.3px;color:#cbcdd2;transform:scaleX(0.8968);">Вставка</span>
<span class="t" style="left:181.00px;top:28.89px;font-size:12.3px;color:#cbcdd2;transform:scaleX(0.9883);">Аннотации</span>
<span class="t" style="left:262.50px;top:28.89px;font-size:12.3px;color:#cbcdd2;transform:scaleX(0.9520);">Параметризация</span>
<span class="t" style="left:375.50px;top:28.89px;font-size:12.3px;color:#cbcdd2;transform:scaleX(0.8764);">Вид</span>
<span class="t" style="left:415.00px;top:28.89px;font-size:12.3px;color:#cbcdd2;transform:scaleX(0.9655);">Управление</span>
<span class="t" style="left:501.00px;top:28.89px;font-size:12.3px;color:#cbcdd2;transform:scaleX(0.9412);">Вывод</span>
<span class="t" style="left:556.75px;top:28.89px;font-size:12.3px;color:#cbcdd2;transform:scaleX(0.9632);">Надстройки</span>
<span class="t" style="left:642.50px;top:28.89px;font-size:12.3px;color:#cbcdd2;transform:scaleX(0.9443);">Совместная работа</span>
<span class="t" style="left:769.50px;top:28.89px;font-size:12.3px;color:#cbcdd2;transform:scaleX(0.9754);">Рекомендованные приложения</span>
<span class="t" style="left:7.75px;top:88.59px;font-size:12px;color:#eceef1;transform:scaleX(0.9786);">Отрезок</span>
<span class="t" style="left:58.75px;top:88.59px;font-size:12px;color:#eceef1;transform:scaleX(1.0075);">Полилиния</span>
<span class="t" style="left:136.00px;top:88.59px;font-size:12px;color:#eceef1;transform:scaleX(1.0039);">Круг</span>
<span class="t" style="left:183.00px;top:88.59px;font-size:12px;color:#eceef1;transform:scaleX(0.9727);">Дуга</span>
<span class="t" style="left:409.40px;top:88.59px;font-size:12px;color:#eceef1;transform:scaleX(0.9713);">Текст</span>
<span class="t" style="left:453.50px;top:88.59px;font-size:12px;color:#eceef1;transform:scaleX(0.9455);">Размер</span>
<span class="t" style="left:541.50px;top:88.59px;font-size:12px;color:#eceef1;transform:scaleX(0.9506);">Свойства</span>
<span class="t" style="left:554.75px;top:103.44px;font-size:12px;color:#eceef1;transform:scaleX(0.9368);">слоя</span>
<span class="t" style="left:810.60px;top:87.59px;font-size:12px;color:#eceef1;transform:scaleX(0.9112);">Вставка</span>
<span class="t" style="left:898.50px;top:86.84px;font-size:12px;color:#eceef1;transform:scaleX(0.9535);">Свойства</span>
<span class="t" style="left:963.50px;top:86.84px;font-size:12px;color:#eceef1;transform:scaleX(1.0317);">Группы</span>
<span class="t" style="left:1021.90px;top:86.84px;font-size:12px;color:#eceef1;transform:scaleX(0.9831);">Утилиты</span>
<span class="t" style="left:1088.75px;top:86.84px;font-size:12px;color:#eceef1;transform:scaleX(0.8806);">Буфе...</span>
<span class="t" style="left:1157.50px;top:86.84px;font-size:12px;color:#eceef1;transform:scaleX(0.8978);">Вид</span>
<span class="t" style="left:678.50px;top:54.84px;font-size:12px;color:#e6e8ec;transform:scaleX(0.8224);">0</span>
<span class="t" style="left:95.00px;top:126.84px;font-size:12px;color:#dfe2e7;transform:scaleX(0.9762);">Рисование</span>
<span class="t" style="left:278.50px;top:126.84px;font-size:12px;color:#dfe2e7;transform:scaleX(0.9669);">Редактирование</span>
<span class="t" style="left:428.00px;top:126.84px;font-size:12px;color:#dfe2e7;transform:scaleX(1.0086);">Аннотации</span>
<span class="t" style="left:649.75px;top:126.84px;font-size:12px;color:#dfe2e7;transform:scaleX(0.9679);">Слои</span>
<span class="t" style="left:829.60px;top:126.84px;font-size:12px;color:#dfe2e7;transform:scaleX(0.9846);">Блок</span>
<span class="t" style="left:32.50px;top:153.67px;font-size:11.5px;color:#c6cad1;transform:scaleX(1.0292);">Начало</span>
<span class="t" style="left:155.50px;top:153.67px;font-size:11.5px;color:#f2f3f5;transform:scaleX(1.0010);">Чертеж1</span>
<span class="t" style="left:5.00px;top:182.87px;font-size:11.5px;color:#d9dbe0;transform:scaleX(1.0602);">[−][Сверху][2D-каркас]</span>
<span class="t" style="left:1168.75px;top:272.46px;font-size:16px;color:#525866;transform:scaleX(0.8178);-webkit-text-stroke:0.3px #525866;">Сверху</span>
<span class="t" style="left:1183.75px;top:214.07px;font-size:20px;color:#a3a7af;transform:scaleX(0.8130);-webkit-text-stroke:0.3px #a3a7af;">С</span>
<span class="t" style="left:1128.75px;top:271.07px;font-size:20px;color:#a3a7af;transform:scaleX(0.7649);-webkit-text-stroke:0.3px #a3a7af;">З</span>
<span class="t" style="left:1241.00px;top:271.07px;font-size:20px;color:#a3a7af;transform:scaleX(0.7494);-webkit-text-stroke:0.3px #a3a7af;">В</span>
<span class="t" style="left:1180.50px;top:328.57px;font-size:20px;color:#a3a7af;transform:scaleX(0.9026);-webkit-text-stroke:0.3px #a3a7af;">Ю</span>
<span class="t" style="left:1170.75px;top:371.39px;font-size:11px;color:#626877;transform:scaleX(0.9037);">МСК</span>
<span class="t" style="left:23.40px;top:894.07px;font-size:11.5px;color:#ffffff;transform:scaleX(1.0240);font-weight:bold;">Модель</span>
<span class="t" style="left:91.90px;top:894.07px;font-size:11.5px;color:#c3c7ce;transform:scaleX(0.9844);">Лист1</span>
<span class="t" style="left:147.20px;top:894.07px;font-size:11.5px;color:#c3c7ce;transform:scaleX(1.0035);">Лист2</span>
<span class="t" style="left:348.00px;top:870.59px;font-size:12px;color:#5d626c;transform:scaleX(0.9627);font-style:italic;font-family:'Liberation Mono', monospace;">Введите команду</span>
<span class="t" style="left:738.00px;top:898.95px;font-size:12.7px;color:#eceef0;transform:scaleX(0.9002);">МОДЕЛЬ</span>
<span class="t" style="left:1105.00px;top:898.95px;font-size:12.7px;color:#eceef0;transform:scaleX(0.7087);font-weight:bold;">1:1</span>
<span class="t" style="left:1004.80px;top:700.92px;font-size:11.2px;color:#f4f5f7;transform:scaleX(1.0947);-webkit-text-stroke:0.35px #f4f5f7;">Рисование и аннотации</span>
<span class="t" style="left:1004.80px;top:724.72px;font-size:11.2px;color:#f4f5f7;transform:scaleX(1.0879);-webkit-text-stroke:0.35px #f4f5f7;">Основы 3D</span>
<span class="t" style="left:1004.80px;top:748.62px;font-size:11.2px;color:#f4f5f7;transform:scaleX(1.1152);-webkit-text-stroke:0.35px #f4f5f7;">3D-моделирование</span>
<span class="t" style="left:1004.80px;top:772.42px;font-size:11.2px;color:#f4f5f7;transform:scaleX(1.0940);-webkit-text-stroke:0.35px #f4f5f7;">Классический AutoCAD</span>
<span class="t" style="left:1004.80px;top:801.92px;font-size:11.2px;color:#f4f5f7;transform:scaleX(1.0799);-webkit-text-stroke:0.35px #f4f5f7;">Сохранить текущее как...</span>
<span class="t" style="left:1004.80px;top:825.72px;font-size:11.2px;color:#f4f5f7;transform:scaleX(1.0855);-webkit-text-stroke:0.35px #f4f5f7;">Параметры рабочего пространства...</span>
<span class="t" style="left:1004.80px;top:849.52px;font-size:11.2px;color:#f4f5f7;transform:scaleX(1.0712);-webkit-text-stroke:0.35px #f4f5f7;">Адаптация...</span>
<span class="t" style="left:1004.80px;top:873.92px;font-size:11.2px;color:#f4f5f7;transform:scaleX(1.0990);-webkit-text-stroke:0.35px #f4f5f7;">Отображение меток рабочего пространства</span>
</body></html>
